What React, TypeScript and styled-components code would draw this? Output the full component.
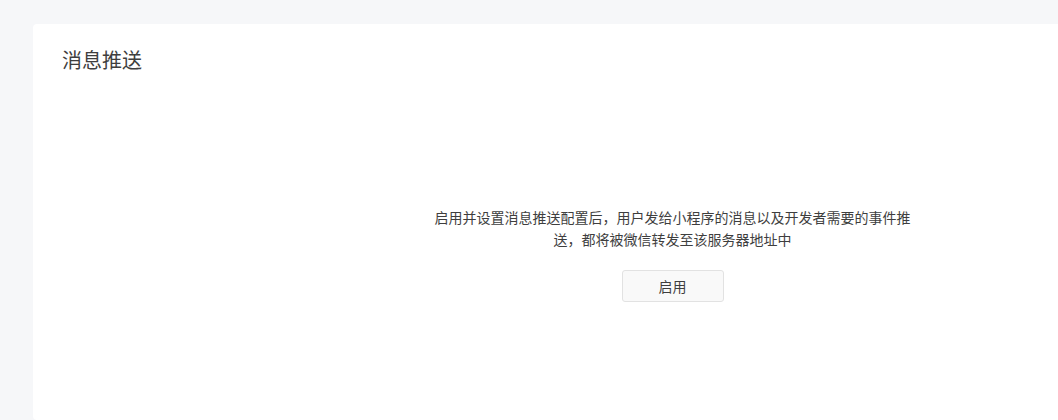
import styled, { createGlobalStyle } from "styled-components";

const GlobalStyle = createGlobalStyle`
  html, body {
    margin: 0;
    padding: 0;
    background: #f6f7f9;
    overflow: hidden;
    font-family: "Noto Sans CJK SC", "Noto Sans", sans-serif;
  }
`;

const Page = styled.div`
  width: 100vw;
  height: 420px;
  padding: 24px 0 0 33px;
  box-sizing: border-box;
  overflow: hidden;
`;

const Card = styled.section`
  width: 1279px;
  height: 396px;
  background: #fff;
  border-radius: 4px;
  padding: 22px 29px 0;
  box-sizing: border-box;
`;

const Title = styled.h2`
  margin: 0;
  font-size: 20px;
  line-height: 28px;
  font-weight: 400;
  color: #3e3e3e;
`;

const Empty = styled.div`
  display: flex;
  flex-direction: column;
  align-items: center;
  padding-top: 132px;
`;

const Tip = styled.p`
  margin: 0;
  max-width: 480px;
  font-size: 14px;
  line-height: 22px;
  color: #3e3e3e;
  text-align: center;
`;

const Button = styled.button`
  margin-top: 20px;
  width: 102px;
  height: 32px;
  border: 1px solid #e2e2e2;
  border-radius: 3px;
  background: #f9f9f9;
  color: #3e3e3e;
  font-family: inherit;
  font-size: 14px;
  cursor: pointer;
`;

const App = () => {
  return (
    <>
      <GlobalStyle />
      <Page>
        <Card>
          <Title>消息推送</Title>
          <Empty>
            <Tip>
              启用并设置消息推送配置后，用户发给小程序的消息以及开发者需要的事件推送，都将被微信转发至该服务器地址中
            </Tip>
            <Button>启用</Button>
          </Empty>
        </Card>
      </Page>
    </>
  );
};

export default App;
